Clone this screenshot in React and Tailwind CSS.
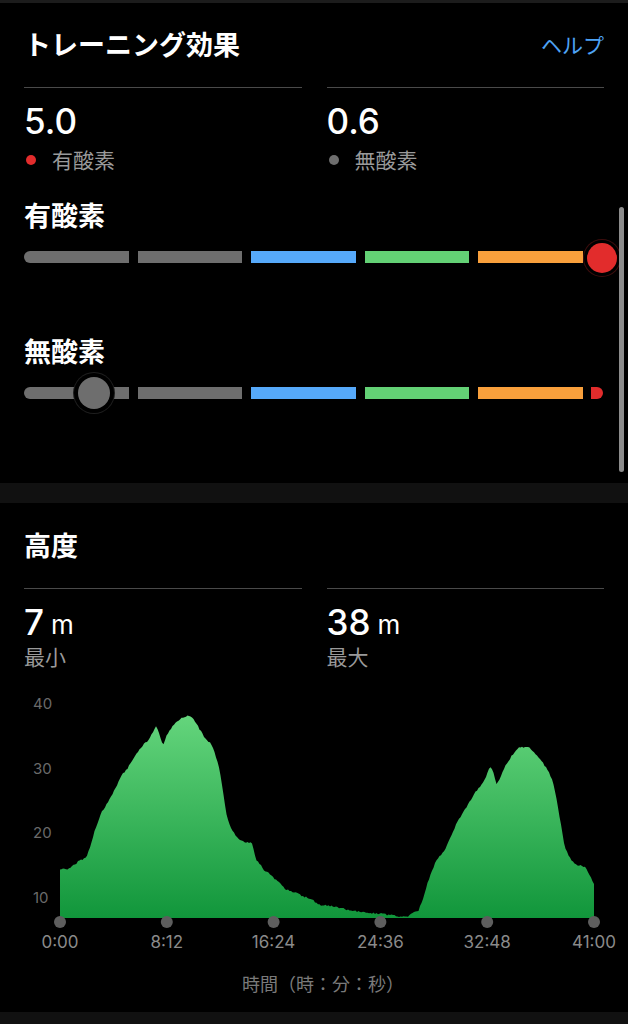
import React from "react";

const segColors = ["#6e6e6e", "#6e6e6e", "#56a9fa", "#63d175", "#f9a03c"];

// altitude trace, taken off the reference by eye (zoom coords)
const profile = [
  [150, 570], [175, 565], [200, 540], [215, 535], [220, 520], [240, 440],
  [255, 395], [270, 365], [290, 320], [305, 285], [320, 262], [335, 230],
  [350, 205], [370, 180], [385, 150], [390, 135], [400, 170], [407, 200],
  [415, 170], [430, 140], [450, 115], [465, 108], [480, 112], [490, 130],
  [510, 170], [530, 195], [545, 250], [555, 320], [565, 400], [575, 440],
  [590, 470], [605, 485], [630, 490], [640, 540], [660, 570], [680, 590],
  [695, 605], [710, 625], [730, 635], [760, 650], [775, 655], [780, 660],
  [800, 675], [830, 678], [870, 690], [900, 697], [940, 700], [980, 706],
  [1000, 710], [1020, 708], [1030, 700], [1045, 690], [1055, 660],
  [1070, 600], [1090, 540], [1110, 510], [1125, 470], [1140, 430],
  [1160, 390], [1185, 340], [1205, 310], [1215, 285], [1222, 260],
  [1230, 270], [1240, 315], [1250, 290], [1265, 250], [1285, 215],
  [1300, 200], [1325, 205], [1340, 225], [1365, 265], [1380, 300],
  [1390, 360], [1400, 430], [1410, 500], [1425, 540], [1440, 555],
  [1460, 560], [1470, 580], [1483, 610],
];

function areaPath() {
  const pts = profile.map(([zx, zy]) => [60 + ((zx - 150) / 1333) * 534, 680 + zy / 3]);
  let d = "M60 918";
  let i = 0;
  for (let x = 60; x <= 594.01; x += 1.5) {
    while (i < pts.length - 2 && pts[i + 1][0] < x) i++;
    const [x0, y0] = pts[i];
    const [x1, y1] = pts[i + 1];
    const t = Math.max(0, Math.min(1, (x - x0) / (x1 - x0)));
    const n = Math.sin(x * 12.9898) * 43758.5453;
    const y = Math.min(917, y0 + (y1 - y0) * t + (n - Math.floor(n) - 0.5) * 1.8);
    d += ` L${x.toFixed(1)} ${y.toFixed(1)}`;
  }
  return d + " L594 918 Z";
}

function EffectBar({ knob }) {
  return (
    <div className="relative mt-[6px] h-[40px] px-6 flex items-center">
      <div className="flex w-[559px] gap-[9px]">
        {segColors.map((c, i) => (
          <div
            key={i}
            className={`flex-1 h-[12px] ${i === 0 ? "rounded-l-full" : ""}`}
            style={{ backgroundColor: c }}
          />
        ))}
      </div>
      {knob === "max" ? (
        <div className="absolute left-[587px] top-[6px] w-[30px] h-[30px] rounded-full bg-[#e22c2c] shadow-[0_0_0_3px_#000,0_0_0_4px_#3d0d0d]" />
      ) : (
        <>
          <div className="ml-[8px] w-[12px] h-[12px] rounded-r-full bg-[#e22c2c]" />
          <div className="absolute left-[78px] top-[4px] w-[32px] h-[32px] rounded-full bg-[#6e6e6e] shadow-[0_0_0_4px_#000,0_0_0_5px_#1e1e1e]" />
        </>
      )}
    </div>
  );
}

function Stat({ value, unit, label, dot, tight }) {
  return (
    <div className="border-t border-[#4a4a4a]">
      <div className="mt-[13px] h-[40px] flex items-center">
        <span className="text-[35px] font-medium leading-none">{value}</span>
        {unit && <span className="ml-[7px] text-[26px] leading-none mt-[6px]">{unit}</span>}
      </div>
      <div
        className={`${tight ? "mt-[3px]" : "mt-[7px]"} h-[24px] flex items-center gap-[16px] text-[21px] text-[#9a9a9a] leading-none`}
      >
        {dot && <span className="ml-[2px] w-[10px] h-[10px] rounded-full" style={{ backgroundColor: dot }} />}
        {label}
      </div>
    </div>
  );
}

export default function App() {
  const xs = [60, 166.8, 273.6, 380.4, 487.2, 594];
  const xLabels = ["0:00", "8:12", "16:24", "24:36", "32:48", "41:00"];
  const yLabels = [
    ["40", 703.5],
    ["30", 768],
    ["20", 832.5],
    ["10", 897],
  ];

  return (
    <div className="relative w-full bg-black text-white font-[family-name:Inter,'Noto_Sans_CJK_JP',sans-serif]">
      <div className="h-[3px] bg-[#1c1c1c]" />

      {/* トレーニング効果 */}
      <section className="pb-[70px]">
        <div className="h-[84px] px-6 flex items-center justify-between">
          <h1 className="text-[27px] font-bold leading-none">トレーニング効果</h1>
          <span className="text-[21px] text-[#4ea3f5] leading-none">ヘルプ</span>
        </div>
        <div className="px-6 grid grid-cols-2 gap-x-[25px]">
          <Stat value="5.0" label="有酸素" dot="#e22c2c" />
          <Stat value="0.6" label="無酸素" dot="#6e6e6e" />
        </div>

        <div className="mt-[29px] h-[30px] px-6 flex items-center text-[27px] font-bold leading-none">有酸素</div>
        <EffectBar knob="max" />

        <div className="mt-[60px] h-[30px] px-6 flex items-center text-[27px] font-bold leading-none">無酸素</div>
        <EffectBar knob="low" />
      </section>

      <div className="h-[20px] bg-[#111111]" />

      {/* 高度 */}
      <section className="pb-[12px]">
        <div className="mt-[28px] h-[30px] px-6 flex items-center text-[27px] font-bold leading-none">高度</div>
        <div className="mt-[27px] px-6 grid grid-cols-2 gap-x-[25px]">
          <Stat value="7" unit="m" label="最小" tight />
          <Stat value="38" unit="m" label="最大" tight />
        </div>

        <svg className="block w-full h-[291px]" viewBox="0 669 628 291">
          <defs>
            <linearGradient id="alt" x1="0" y1="716" x2="0" y2="918" gradientUnits="userSpaceOnUse">
              <stop offset="0" stopColor="#64d57c" />
              <stop offset="1" stopColor="#11963b" />
            </linearGradient>
          </defs>
          {yLabels.map(([t, y]) => (
            <text key={t} x="33" y={y} fontSize="15" fill="#6a6a6a" dominantBaseline="central">
              {t}
            </text>
          ))}
          <path d={areaPath()} fill="url(#alt)" />
          {xs.map((x, i) => (
            <g key={i}>
              <circle cx={x} cy="922" r="6" fill="#5e5e5e" />
              <text x={x} y="942" fontSize="17" fill="#8a8a8a" textAnchor="middle" dominantBaseline="central">
                {xLabels[i]}
              </text>
            </g>
          ))}
        </svg>

        <div className="mt-[10px] h-[30px] pl-[18px] flex items-center justify-center text-[18px] text-[#7a7a7a] leading-none">
          時間（時：分：秒）
        </div>
      </section>

      <div className="h-[12px] bg-[#111111]" />

      <div className="absolute left-[619px] top-[207px] w-[5px] h-[265px] rounded-full bg-[#8c8c8c]" />
    </div>
  );
}
